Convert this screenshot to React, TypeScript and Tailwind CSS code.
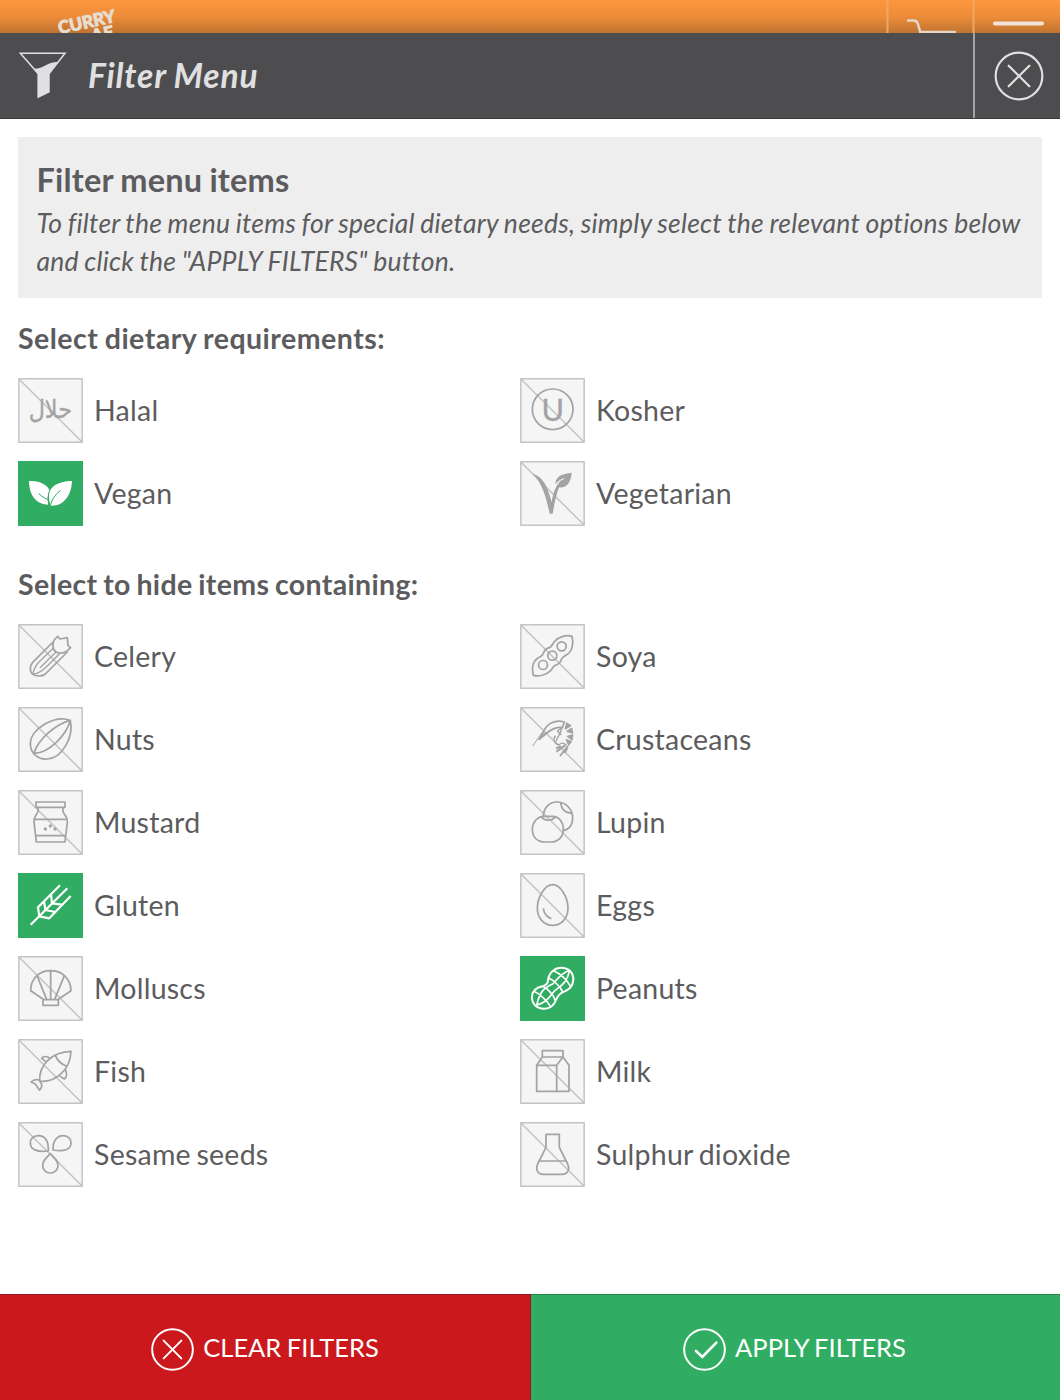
import React, { useState } from "react";
import clsx from "clsx";

interface FilterOption {
    id: string;
    label: string;
    icon: React.ReactNode;
}

interface FilterTileProps {
    option: FilterOption;
    active: boolean;
    onToggle: (id: string) => void;
}

// Icons share a 195 unit square, three units per pixel
const DIETARY: FilterOption[] = [
    {
        id: "halal",
        label: "Halal",
        icon: (
            <text x="97" y="120" textAnchor="middle" fontSize="76" strokeWidth="1" fill="currentColor" fontFamily="DejaVu Sans, sans-serif" textLength="130" lengthAdjust="spacingAndGlyphs">
                حلال
            </text>
        ),
    },
    {
        id: "kosher",
        label: "Kosher",
        icon: (
            <>
                <circle cx="98" cy="94" r="61" />
                <text x="98" y="129" textAnchor="middle" fontSize="92" strokeWidth="1" fill="currentColor" fontFamily="Lato, sans-serif">
                    U
                </text>
            </>
        ),
    },
    {
        id: "vegan",
        label: "Vegan",
        icon: (
            <>
                <path stroke="none" fill="currentColor" d="M33 60C66 58 90 72 95 90C88 102 88 116 91 131C58 130 34 108 33 60Z" />
                <path stroke="none" fill="currentColor" d="M162 60C125 60 92 76 93 104C93 116 95 126 98 134C136 136 160 105 162 60Z" />
                <path stroke="#31ad63" strokeWidth="3" d="M62 98C76 110 84 114 92 116M97 134C102 114 112 100 128 88M95 88C89 102 89 118 94 134" />
            </>
        ),
    },
    {
        id: "vegetarian",
        label: "Vegetarian",
        icon: (
            <>
                <path stroke="none" fill="currentColor" d="M38 38C70 46 84 80 95 124C99 98 106 74 124 57L129 61C112 80 106 115 98 158L89 158C79 110 66 64 38 38Z" />
                <path stroke="none" fill="currentColor" d="M155 35C126 39 107 44 106 70C116 58 124 54 134 51C124 60 116 68 113 78C138 84 153 66 155 35Z" />
            </>
        ),
    },
];

const ALLERGENS: FilterOption[] = [
    {
        id: "celery",
        label: "Celery",
        icon: (
            <>
                <path d="M105 54L44 115C34 127 35 142 43 150C54 158 72 158 82 150L148 84" />
                <path d="M119 37L126 45L148 41L150 65L158 71L146 82C130 92 112 88 106 74C102 60 108 46 119 37Z" />
                <path strokeWidth="4" d="M106 72L60 117C51 128 46 140 45 151M126 88L84 130C72 141 60 150 45 151M114 84L66 131" />
            </>
        ),
    },
    {
        id: "soya",
        label: "Soya",
        icon: (
            <>
                <path d="M156 37C162 60 156 84 140 92C130 97 127 99 124 107C120 119 112 122 104 125C98 128 98 134 92 140C78 154 56 158 40 154C34 134 38 112 54 102C62 98 68 96 70 88C74 76 80 72 90 70C96 66 98 60 104 52C118 38 140 32 156 37Z" />
                <circle cx="125" cy="67" r="13.5" />
                <circle cx="97" cy="95" r="13.5" />
                <circle cx="69" cy="123" r="13.5" />
            </>
        ),
    },
    {
        id: "nuts",
        label: "Nuts",
        icon: <path d="M157 40C110 22 37 66 37 110C37 140 62 158 88 156C132 154 168 90 157 40ZM157 40C116 50 60 96 48 139C92 140 146 84 157 40Z" />,
    },
    {
        id: "crustaceans",
        label: "Crustaceans",
        icon: (
            <>
                <path strokeWidth="3" d="M38 117L68 74M55 98L72 84" />
                <path d="M70 75C80 50 106 36 133 45L127 62C106 58 88 70 58 97L70 75ZM80 76L60 94" />
                <path strokeWidth="4" d="M127 62L112 72L124 84M124 64C126 78 112 86 108 104M106 86C98 100 104 112 118 113C126 104 136 110 140 116" />
                <path d="M140 48L152 56L136 66ZM155 64L158 78L141 73ZM158 84L156 99L142 88ZM154 104L146 114L139 98Z" fill="currentColor" strokeWidth="4" />
                <path strokeWidth="6" d="M144 117L120 147M136 115L109 134M124 118L108 124M142 122L134 138" />
            </>
        ),
    },
    {
        id: "mustard",
        label: "Mustard",
        icon: (
            <>
                <path d="M54 36H141V52H54ZM60 52V64C58 74 46 78 48 96L55 156H141L148 96C150 78 136 74 135 64V52M48 88H147M53 137H143" />
                <path stroke="none" fill="currentColor" d="M77 117a5 5 0 1 0 10 0a5 5 0 1 0-10 0M92 108a5 5 0 1 0 10 0a5 5 0 1 0-10 0M106 117a5 5 0 1 0 10 0a5 5 0 1 0-10 0" />
            </>
        ),
    },
    {
        id: "lupin",
        label: "Lupin",
        icon: (
            <>
                <path d="M70 80C70 54 88 36 110 36C138 36 158 58 158 84C158 106 146 118 131 122" />
                <path d="M122 38C124 58 134 69 155 70" />
                <path d="M72 79H98C118 79 130 98 130 117C130 142 114 156 92 156H76C52 156 37 142 37 117C37 98 52 79 72 79ZM64 80C72 94 96 94 106 80" />
            </>
        ),
    },
    {
        id: "gluten",
        label: "Gluten",
        icon: <path strokeWidth="6.5" d="M38 155L148 46M64 130L60 103L126 37M64 130L94 136L158 69M78 84L82 111L112 117M99 64L102 91L132 95" />,
    },
    {
        id: "eggs",
        label: "Eggs",
        icon: (
            <>
                <path d="M98 35C122 35 144 74 144 106C144 136 124 157 98 157C72 157 52 136 52 106C52 74 74 35 98 35Z" />
                <path d="M70 106C72 122 80 132 94 137" />
            </>
        ),
    },
    {
        id: "molluscs",
        label: "Molluscs",
        icon: <path d="M76 130L38 104C38 66 66 44 98 44C130 44 158 66 159 104L121 130M75 131H121V148H75ZM98 44V130M57 59L86 130M139 59L110 130" />,
    },
    {
        id: "peanuts",
        label: "Peanuts",
        icon: (
            <>
                <path strokeWidth="6" d="M84 74C86 48 106 35 124 35C146 35 160 50 160 70C160 94 142 104 128 109C112 115 112 126 104 140C96 153 86 158 72 158C50 158 36 144 36 124C36 102 52 94 68 91C78 88 83 82 84 74Z" />
                <path strokeWidth="5" d="M149 43C124 50 108 74 98 84C76 94 60 102 50 148M149 43C142 76 126 88 112 98C92 108 96 132 50 148M101 44C120 52 142 72 152 92M86 66C100 72 122 92 128 108M68 91C80 96 100 114 106 134M42 106C60 114 84 136 92 153" />
            </>
        ),
    },
    {
        id: "fish",
        label: "Fish",
        icon: (
            <>
                <path d="M159 37C102 38 62 78 65 127C112 131 157 94 159 37ZM112 49C118 64 130 76 147 82" />
                <path d="M96 58C86 50 76 52 71 58L83 68M142 92C148 104 146 116 139 120L126 112M64 123C54 120 46 122 39 129C48 132 52 134 54 138L64 153C72 146 73 136 67 128" />
            </>
        ),
    },
    {
        id: "milk",
        label: "Milk",
        icon: <path d="M67 35H129V54H67ZM67 54L50 79V157H147V79L129 54L110 79V157M50 79H110" />,
    },
    {
        id: "sesame",
        label: "Sesame seeds",
        icon: (
            <path d="M91 87C92 60 84 41 61 41C45 41 37 52 37 63C37 82 56 91 91 87ZM105 84C104 58 116 41 136 41C151 41 159 52 159 63C159 80 142 91 105 84ZM97 95C84 108 74 116 74 130C74 144 84 153 97 153C110 153 120 144 120 130C120 116 110 108 97 95Z" />
        ),
    },
    {
        id: "sulphur",
        label: "Sulphur dioxide",
        icon: <path d="M78 37H118V76L143 126C150 142 144 156 126 157H70C52 156 46 142 53 126L78 76ZM58 117H138" />,
    },
];

const FilterTile: React.FC<FilterTileProps> = ({ option, active, onToggle }) => (
    <button onClick={() => onToggle(option.id)} className="flex h-[65px] items-center gap-[11px] text-left">
        <svg
            viewBox="0 0 195 195"
            className={clsx("h-[65px] w-[65px] shrink-0", active ? "bg-[#31ad63] text-white" : "bg-[#f5f5f5] text-[#a3a3a3]")}
            fill="none"
            stroke="currentColor"
            strokeWidth="5.2"
            strokeLinejoin="round"
        >
            {!active && <path d="M2.5 2.5H192.5V192.5H2.5ZM2 2L193 193" stroke="#c4c4c4" strokeWidth="4.5" />}
            {option.icon}
        </svg>
        <span className="mb-px text-[28.5px] leading-[40px] tracking-[0.25px] [word-spacing:-2px]">{option.label}</span>
    </button>
);

const App: React.FC = () => {
    const [selected, setSelected] = useState<string[]>(["vegan", "gluten", "peanuts"]);

    const toggle = (id: string) => {
        setSelected((prev) => (prev.includes(id) ? prev.filter((x) => x !== id) : [...prev, id]));
    };

    const renderGrid = (options: FilterOption[]) => (
        <div className="grid grid-cols-[502px_502px] gap-y-[18px]">
            {options.map((o) => (
                <FilterTile key={o.id} option={o} active={selected.includes(o.id)} onToggle={toggle} />
            ))}
        </div>
    );

    return (
        <div className="flex h-[1400px] w-[1060px] flex-col overflow-hidden bg-white font-['Lato',sans-serif] text-[#5c5c5e]">
            {/* Page behind the dialog */}
            <div className="relative h-[33px] shrink-0 overflow-hidden bg-linear-to-b from-[#fe963e] via-[#ed8c3a] to-[#bf7430]">
                <div className="absolute left-[59px] top-[14px] -rotate-12 text-[17.5px] font-black leading-[15px] text-[#e8ddd3] [-webkit-text-stroke:0.8px_#e8ddd3]">
                    <div>CURRY</div>
                    <div className="pl-[31px]">AE</div>
                </div>
                <svg className="absolute left-[886px] top-0 h-[33px] w-[174px]" viewBox="0 0 174 33" fill="none">
                    <path d="M1.5 0V33M87.5 0V33" stroke="#f0a763" strokeWidth="2" />
                    <path d="M21 20.5H28C30 20.5 31 21 32 24L34.5 33M34 32H70" stroke="#e5d6c8" strokeWidth="2.5" />
                    <path d="M109 23.5H156" stroke="#f0e4da" strokeWidth="4" strokeLinecap="round" />
                </svg>
            </div>

            {/* Dialog header */}
            <header className="flex h-[86px] shrink-0 items-center border-b border-[#3a3a3b] bg-[#4d4d4f] text-[#e0e0e2]">
                <svg className="mb-[2px] ml-[18px] h-[48px] w-[50px]" viewBox="0 0 150 144" fill="none">
                    <path d="M7 7H141L93 68V122L61 138V68Z" stroke="currentColor" strokeWidth="4.5" />
                    <path d="M46 53C78 54 82 34 122 32L93 69V124L59 140V70Z" fill="currentColor" />
                </svg>
                <h1 className="mb-[1px] ml-[20px] flex-1 text-[33.5px] font-bold italic leading-[40px] tracking-[0.85px] [word-spacing:-1px]">Filter Menu</h1>
                <button className="flex h-full w-[87px] items-center justify-center border-l-2 border-[#a3a3a4] pl-[2px]">
                    <svg className="h-[50px] w-[50px]" viewBox="0 0 150 150" fill="none" stroke="currentColor" strokeWidth="6.5" strokeLinecap="round">
                        <circle cx="75" cy="75" r="70" />
                        <path d="M44 44L106 106M106 44L44 106" />
                    </svg>
                </button>
            </header>

            <main className="flex-1 px-[18px] pt-[18px]">
                <section className="h-[161px] bg-[#eeeeee] px-[18.5px] pt-[23px]">
                    <h2 className="text-[32.5px] font-bold leading-[40px] tracking-[0.2px] [word-spacing:-1px]">Filter menu items</h2>
                    <p className="mt-[4px] whitespace-nowrap text-[26.5px] italic leading-[38px] tracking-[0.24px] [word-spacing:-1px]">
                        To filter the menu items for special dietary needs, simply select the relevant options below
                        <br />
                        and click the "APPLY FILTERS" button.
                    </p>
                </section>

                <h3 className="mb-[20px] mt-[20px] text-[28.5px] font-bold leading-[40px] tracking-[0.48px] [word-spacing:-1px]">Select dietary requirements:</h3>
                {renderGrid(DIETARY)}

                <h3 className="mb-[20px] mt-[38px] text-[28.5px] font-bold leading-[40px] tracking-[0.33px] [word-spacing:-1.5px]">Select to hide items containing:</h3>
                {renderGrid(ALLERGENS)}
            </main>

            <footer className="flex h-[106px] shrink-0 text-[25.5px] text-white">
                <button className="flex w-[531px] items-center justify-center gap-[9px] border-r border-t border-[#97161a] bg-[#cb181c] pt-[3px]">
                    <svg className="h-[43px] w-[43px]" viewBox="0 0 129 129" fill="none" stroke="currentColor" strokeWidth="6" strokeLinecap="round">
                        <circle cx="64.5" cy="64.5" r="61" />
                        <path d="M38 38L91 91M91 38L38 91" />
                    </svg>
                    <span className="mb-[3px] [word-spacing:-1px]">CLEAR FILTERS</span>
                </button>
                <button className="flex flex-1 items-center justify-center gap-[9px] border-t border-[#27824b] bg-[#31ad63] pr-[2px] pt-[3px]">
                    <svg className="h-[43px] w-[43px]" viewBox="0 0 129 129" fill="none" stroke="currentColor" strokeWidth="6" strokeLinecap="round">
                        <circle cx="64.5" cy="64.5" r="61" />
                        <path d="M39 69L58 87L100 44" strokeWidth="8" />
                    </svg>
                    <span className="mb-[3px] [word-spacing:-1px]">APPLY FILTERS</span>
                </button>
            </footer>
        </div>
    );
};

export default App;
